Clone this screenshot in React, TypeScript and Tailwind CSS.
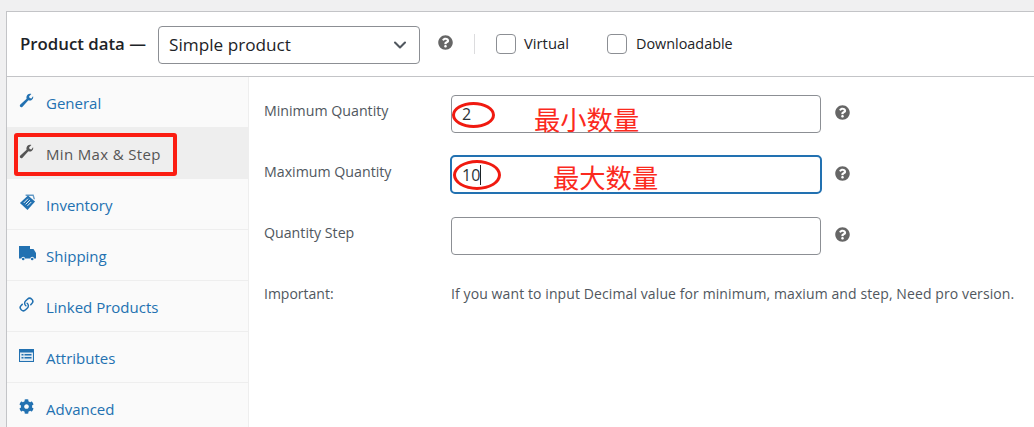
import React from 'react'
import { ChevronDown, Link as LinkIcon } from 'lucide-react'
import { FaCog, FaQuestionCircle } from 'react-icons/fa'

const font = { fontFamily: '"Open Sans", "Noto Sans CJK SC", sans-serif' }

const WrenchIcon = () => (
  <svg width="15" height="15" viewBox="0 0 20 20" fill="currentColor">
    <path d="M19 5.200c0 2.700-2.200 4.900-4.900 4.900-.6 0-1.100-.1-1.600-.3L4.700 18.300c-.9.900-2.200.9-3 .1s-.8-2.100.1-3l8.400-7.900c-.2-.5-.3-1-.3-1.600C9.900 3.200 12.100 1 14.800 1c.6 0 1.200.1 1.700.3l-3 3 .6 2.400 2.400.6 2.200-3c.2.300.3.900.3 1.400z" />
  </svg>
)

const InventoryIcon = () => (
  <svg width="17" height="17" viewBox="0 0 18 18" fill="currentColor">
    <path d="M9.500 1.500 17 8 9 17 1 9.500Z" />
    <g stroke="#fafafa" strokeWidth="1" fill="none">
      <path d="M5 9.500 9.500 5" />
      <path d="M7 11 11.500 6.500" />
      <path d="M9 12.500 13 8.500" />
    </g>
    <path d="M7 0.500h8.500l1.500 5h-1.500l-1-3.500H7Z" opacity="0.7" />
  </svg>
)

const TruckIcon = () => (
  <svg width="17" height="15" viewBox="0 0 17 15" fill="currentColor">
    <path d="M0 0h11v3h3.500L17 7v5.500h-2a1.800 1.800 0 0 0-3.600 0H6a1.800 1.800 0 0 0-3.600 0H0Z" />
    <circle cx="4.200" cy="13" r="1.300" />
    <circle cx="13.200" cy="13" r="1.300" />
  </svg>
)

const AttributesIcon = () => (
  <svg width="15" height="13" viewBox="0 0 15 13">
    <rect width="15" height="13" fill="#2271b1" />
    <rect x="1" y="3.500" width="13" height="8.500" fill="#dfeaf3" />
    <path d="M2.500 5h2v1.500h-2ZM5.500 5h7v1.500h-7ZM2.500 8h2v1.500h-2ZM5.500 8h7v1.500h-7Z" fill="#2271b1" />
  </svg>
)

const tabs = [
  { label: 'General', icon: <WrenchIcon /> },
  { label: 'Min Max & Step', icon: <WrenchIcon />, active: true },
  { label: 'Inventory', icon: <InventoryIcon /> },
  { label: 'Shipping', icon: <TruckIcon /> },
  { label: 'Linked Products', icon: <LinkIcon size={15} strokeWidth={2.400} className="-scale-x-100 rotate-90" /> },
  { label: 'Attributes', icon: <AttributesIcon /> },
  { label: 'Advanced', icon: <FaCog size={15} /> },
]

const Help = () => <FaQuestionCircle size={15} className="text-[#666] shrink-0" />

function Field({ label, value, focused }: { label: string; value?: string; focused?: boolean }) {
  return (
    <div className="flex items-center h-[38px] mb-[23px]">
      <label className="w-[187px] text-[14.200px] text-[#50575e] -mt-[7px]">{label}</label>
      <div
        className={
          focused
            ? 'w-[372px] -ml-[1px] h-[39px] -mt-[1px] rounded-[5px] border-2 border-[#2271b1] flex items-center pl-[10px] text-[16px] text-[#2c3338]'
            : 'w-[370px] h-[38px] rounded-[4px] border border-[#8c8f94] flex items-center pl-[10px] text-[16px] text-[#2c3338]'
        }
      >
        {value}
        {focused && <span className="w-px h-[20px] bg-[#1d2327]" />}
      </div>
      <div className={focused ? 'ml-[13px] -mt-[3px]' : 'ml-[14px] -mt-[3px]'}>
        <Help />
      </div>
    </div>
  )
}

export default function App() {
  return (
    <div className="relative h-[427px] w-[1034px] overflow-hidden bg-[#f0f0f1] pl-[6px] pt-[11px]" style={font}>
      <div className="bg-white border-l border-t border-[#c3c4c7] h-[500px]">
        {/* Header */}
        <div className="h-[65px] border-b border-[#c3c4c7] flex items-center pl-[13px]">
          <span className="w-[138px] text-[16.800px] font-semibold text-[#1d2327] -mt-[1px] whitespace-nowrap">Product data —</span>
          <div className="w-[262px] h-[38px] mt-[1px] pt-[1px] rounded-[4px] border border-[#8c8f94] flex items-center justify-between pl-[10px] pr-[9px] text-[#1d2327] text-[17.200px] font-medium">
            Simple product
            <ChevronDown size={20} strokeWidth={2.500} className="text-[#50575e]" />
          </div>
          <div className="ml-[18px] -mt-[3px]">
            <Help />
          </div>
          <div className="ml-[21px] w-px h-[20px] bg-[#dcdcde] -mt-[1px]" />
          <div className="ml-[21px] w-[20px] h-[20px] rounded-[4px] border border-[#8c8f94] -mt-[1px]" />
          <span className="ml-[8px] w-[83px] text-[14.800px] text-[#1d2327] -mt-[1px]">Virtual</span>
          <div className="w-[20px] h-[20px] rounded-[4px] border border-[#8c8f94] -mt-[1px]" />
          <span className="ml-[9px] text-[14.400px] text-[#1d2327] -mt-[1px]">Downloadable</span>
        </div>

        <div className="flex">
          {/* Tabs */}
          <div className="w-[242px] bg-[#fafafa] border-r border-[#eee] shrink-0">
            {tabs.map((t) => (
              <div
                key={t.label}
                className={
                  t.active
                    ? 'h-[51px] flex items-center bg-[#eeeeee] text-[#555] text-[15px] tracking-[0.35px] border-b border-[#eee] pt-[2px]'
                    : 'h-[51px] flex items-center text-[#2271b1] text-[15px] border-b border-[#eee] pt-[2px]'
                }
              >
                <span className="w-[39px] pl-[12px] flex -mt-[5px]">{t.icon}</span>
                {t.label}
              </div>
            ))}
          </div>

          {/* Fields */}
          <div className="flex-1 pl-[15px] pt-[18px]">
            <Field label="Minimum Quantity" value="2" />
            <Field label="Maximum Quantity" value="10" focused />
            <Field label="Quantity Step" />
            <div className="flex text-[14px] text-[#50575e] pt-[5px] whitespace-nowrap">
              <span className="w-[187px]">Important:</span>
              <span className="tracking-[0.1px]">If you want to input Decimal value for minimum, maxium and step, Need pro version.</span>
            </div>
          </div>
        </div>
      </div>

      {/* Red annotations */}
      <div className="absolute left-[14px] top-[133px] w-[163px] h-[43px] rounded-[3px] border-[4px] border-[#fb1d12]" />
      <div className="absolute left-[452px] top-[102px] w-[43px] h-[26px] rounded-[50%] border-[3px] border-[#f01a10]" />
      <div className="absolute left-[453px] top-[160px] w-[48px] h-[30px] rounded-[50%] border-[3px] border-[#f01a10]" />
      <span className="absolute left-[534px] top-[101px] text-[26.300px] leading-[38px] text-[#fb2a1e]">最小数量</span>
      <span className="absolute left-[553px] top-[159px] text-[26.300px] leading-[38px] text-[#fb2a1e]">最大数量</span>
    </div>
  )
}
